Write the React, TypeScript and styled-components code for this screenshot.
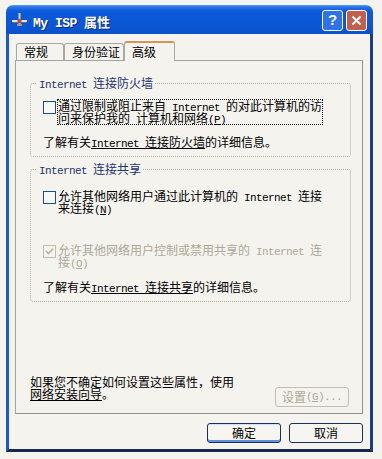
import React from "react";
import styled, { createGlobalStyle } from "styled-components";

const GlobalStyle = createGlobalStyle`
  html, body { margin: 0; padding: 0; background: #f4f3ee; }
  body {
    font-family: "Noto Sans CJK SC", "Noto Sans", sans-serif;
    font-size: 12px;
    line-height: 12px;
    color: #000;
  }
  * { box-sizing: border-box; }
`;

const Page = styled.div`
  width: 382px;
  height: 459px;
  padding: 5px 9px 7px 6px;
`;

const Window = styled.div`
  width: 367px;
  height: 447px;
  display: flex;
  flex-direction: column;
`;

const TitleBar = styled.div`
  height: 29px;
  flex: none;
  border-radius: 7px 7px 0 0;
  background: linear-gradient(
    to bottom,
    #5a9cf5 0,
    #2a74ea 2px,
    #0c5ad8 6px,
    #0a56d4 22px,
    #0b51cb 29px
  );
  display: flex;
  align-items: center;
  padding: 1px 6px 0 6px;
`;

const TitleText = styled.div`
  flex: 1;
  margin-left: 6px;
  margin-top: 3px;
  color: #fff;
  font-weight: bold;
  font-size: 13px;
  line-height: 14px;
  white-space: nowrap;
  text-shadow: 1px 1px 0 #0a2a88;
`;

const TitleLatin = styled.span`
  font-family: "Liberation Mono", monospace;
  font-size: 13px;
  letter-spacing: -0.5px;
  line-height: 0;
  font-weight: bold;
`;

const CaptionButton = styled.div<{ $variant: "help" | "close" }>`
  width: 21px;
  height: 21px;
  margin-left: 3px;
  border: 1px solid #fff;
  border-radius: 3px;
  background: ${(p) => (p.$variant === "close" ? "#c0604f" : "#2f72e6")};
  display: flex;
  align-items: center;
  justify-content: center;
  color: #fff;
  font-family: "Liberation Sans", sans-serif;
  font-weight: bold;
  font-size: 15px;
`;

const Body = styled.div`
  flex: 1;
  display: flex;
  flex-direction: column;
  background: #f4f3ee;
  border-left: 3px solid #1a5ad3;
  border-right: 3px solid #1b3d80;
  border-bottom: 3px solid #16284f;
  padding: 7px 7px 0 6px;
`;

const TabStrip = styled.div`
  height: 19px;
  flex: none;
  display: flex;
  align-items: flex-end;
  padding-left: 1px;
`;

const Tab = styled.div<{ $active?: boolean; $w: number }>`
  width: ${(p) => p.$w}px;
  height: ${(p) => (p.$active ? 20 : 17)}px;
  margin-bottom: ${(p) => (p.$active ? -1 : 0)}px;
  position: relative;
  z-index: ${(p) => (p.$active ? 1 : 0)};
  border: 1px solid #a6a9a4;
  border-bottom: none;
  border-top: ${(p) => (p.$active ? "2px solid #d9925a" : "1px solid #a6a9a4")};
  border-radius: 3px 3px 0 0;
  background: #f4f3ee;
  padding: ${(p) => (p.$active ? "3px" : "2px")} 0 0 7px;
  white-space: nowrap;
`;

const Panel = styled.div`
  height: 354px;
  flex: none;
  border: 1px solid #a3a69f;
  border-right-color: #8f918a;
  border-bottom-color: #8f918a;
  background: #f4f3ee;
  display: flex;
  flex-direction: column;
  padding: 0 11px 0 14px;
`;

const GroupBox = styled.fieldset<{ $top: number }>`
  margin: ${(p) => p.$top}px 0 0 0;
  border: 1px dotted #aeab9e;
  border-radius: 3px;
  padding: 10px 8px 8px 12px;
  min-width: 0;
`;

const GroupTitle = styled.legend`
  padding: 0 2px;
  margin-left: -6px;
  line-height: 12px;
  color: #1f3470;
  white-space: nowrap;
`;

const Latin = styled.span`
  font-family: "Liberation Mono", monospace;
  font-size: 11px;
  letter-spacing: -0.6px;
  line-height: 0;
`;

const Link = styled.span`
  text-decoration: underline;
  text-underline-offset: 1px;
`;

const CheckRow = styled.div<{ $top?: number }>`
  display: flex;
  align-items: flex-start;
  gap: 1px;
  margin-top: ${(p) => p.$top ?? 0}px;
`;

const CheckBox = styled.span<{ $disabled?: boolean }>`
  flex: none;
  width: 13px;
  height: 13px;
  margin-top: 2px;
  border: 1px solid ${(p) => (p.$disabled ? "#c0beb2" : "#1c4f80")};
  background: ${(p) => (p.$disabled ? "transparent" : "#f8f8f4")};
  display: flex;
  align-items: center;
  justify-content: center;
`;

const CheckLabel = styled.span<{ $focus?: boolean; $disabled?: boolean }>`
  border: 1px dotted ${(p) => (p.$focus ? "#000" : "transparent")};
  line-height: 12px;
  white-space: nowrap;
  color: ${(p) => (p.$disabled ? "#aca899" : "#000")};
`;

const InfoLine = styled.div<{ $top: number }>`
  margin-top: ${(p) => p.$top}px;
  white-space: nowrap;
  line-height: 12px;
`;

const Spacer = styled.div`
  flex: 1;
`;

const BottomRow = styled.div`
  display: flex;
  justify-content: space-between;
  align-items: flex-start;
  margin-bottom: 6px;
`;

const HelpText = styled.div`
  line-height: 12px;
  white-space: nowrap;
`;

const Button = styled.div<{ $disabled?: boolean; $default?: boolean }>`
  width: 74px;
  height: 20px;
  border: 1px solid ${(p) => (p.$disabled ? "#c3c0b2" : "#1d2f58")};
  border-radius: 3px;
  background: ${(p) => (p.$disabled ? "#f4f3ee" : "#f6f5f1")};
  color: ${(p) => (p.$disabled ? "#aca899" : "#000")};
  display: flex;
  align-items: center;
  justify-content: center;
  white-space: nowrap;
  box-shadow: ${(p) =>
    p.$default ? "inset 0 -2px 0 #5f8fe0, inset 0 1px 0 #cfe0fb" : "none"};
`;

const SettingsButton = styled(Button)`
  margin-top: 11px;
  margin-right: 2px;
`;

const Footer = styled.div`
  flex: 1;
  display: flex;
  justify-content: flex-end;
  align-items: flex-start;
  gap: 8px;
  padding-top: 9px;
`;

const Check = () => (
  <svg width="9" height="9" viewBox="0 0 9 9">
    <path d="M1 4 L3.5 6.5 L8 1.5" fill="none" stroke="#b7b4a7" strokeWidth="1.6" />
  </svg>
);

const AppIcon = () => (
  <svg width="15" height="14" viewBox="0 0 15 14">
    <rect x="6.5" y="0" width="2" height="12" fill="#d8d8d8" />
    <rect x="0" y="7" width="15" height="2" fill="#e6e6e6" />
    <rect x="1" y="9" width="13" height="1" fill="#6e6e6e" />
    <circle cx="7.5" cy="8" r="2.2" fill="#c44a3a" />
    <rect x="5" y="11" width="5" height="2" fill="#9a9a9a" />
  </svg>
);

const CloseGlyph = () => (
  <svg width="11" height="11" viewBox="0 0 11 11">
    <path d="M1.5 1.5 L9.5 9.5 M9.5 1.5 L1.5 9.5" stroke="#fff" strokeWidth="2" />
  </svg>
);

export default function App() {
  return (
    <>
      <GlobalStyle />
      <Page>
        <Window>
          <TitleBar>
            <AppIcon />
            <TitleText>
              <TitleLatin>My ISP </TitleLatin>属性
            </TitleText>
            <CaptionButton $variant="help">?</CaptionButton>
            <CaptionButton $variant="close">
              <CloseGlyph />
            </CaptionButton>
          </TitleBar>
          <Body>
            <TabStrip>
              <Tab $w={48}>常规</Tab>
              <Tab $w={60}>身份验证</Tab>
              <Tab $w={51} $active>
                高级
              </Tab>
            </TabStrip>
            <Panel>
              <GroupBox $top={16}>
                <GroupTitle>
                  <Latin>Internet </Latin>连接防火墙
                </GroupTitle>
                <CheckRow>
                  <CheckBox />
                  <CheckLabel $focus>
                    通过限制或阻止来自<Latin> Internet </Latin>的对此计算机的访
                    <br />
                    问来保护我的<Latin> </Latin>计算机和网络
                    <Latin>
                      (<Link>P</Link>)
                    </Latin>
                  </CheckLabel>
                </CheckRow>
                <InfoLine $top={11}>
                  了解有关
                  <Link>
                    <Latin>Internet </Latin>连接防火墙
                  </Link>
                  的详细信息。
                </InfoLine>
              </GroupBox>

              <GroupBox $top={6}>
                <GroupTitle>
                  <Latin>Internet </Latin>连接共享
                </GroupTitle>
                <CheckRow $top={4}>
                  <CheckBox />
                  <CheckLabel>
                    允许其他网络用户通过此计算机的<Latin> Internet </Latin>连接
                    <br />
                    来连接
                    <Latin>
                      (<Link>N</Link>)
                    </Latin>
                  </CheckLabel>
                </CheckRow>
                <CheckRow $top={28}>
                  <CheckBox $disabled>
                    <Check />
                  </CheckBox>
                  <CheckLabel $disabled>
                    允许其他网络用户控制或禁用共享的<Latin> Internet </Latin>连
                    <br />
                    接
                    <Latin>
                      (<Link>O</Link>)
                    </Latin>
                  </CheckLabel>
                </CheckRow>
                <InfoLine $top={12}>
                  了解有关
                  <Link>
                    <Latin>Internet </Latin>连接共享
                  </Link>
                  的详细信息。
                </InfoLine>
              </GroupBox>

              <Spacer />

              <BottomRow>
                <HelpText>
                  如果您不确定如何设置这些属性，使用
                  <br />
                  <Link>网络安装向导</Link>。
                </HelpText>
                <SettingsButton $disabled>
                  设置
                  <Latin>
                    (<Link>G</Link>)...
                  </Latin>
                </SettingsButton>
              </BottomRow>
            </Panel>
            <Footer>
              <Button $default>确定</Button>
              <Button>取消</Button>
            </Footer>
          </Body>
        </Window>
      </Page>
    </>
  );
}
